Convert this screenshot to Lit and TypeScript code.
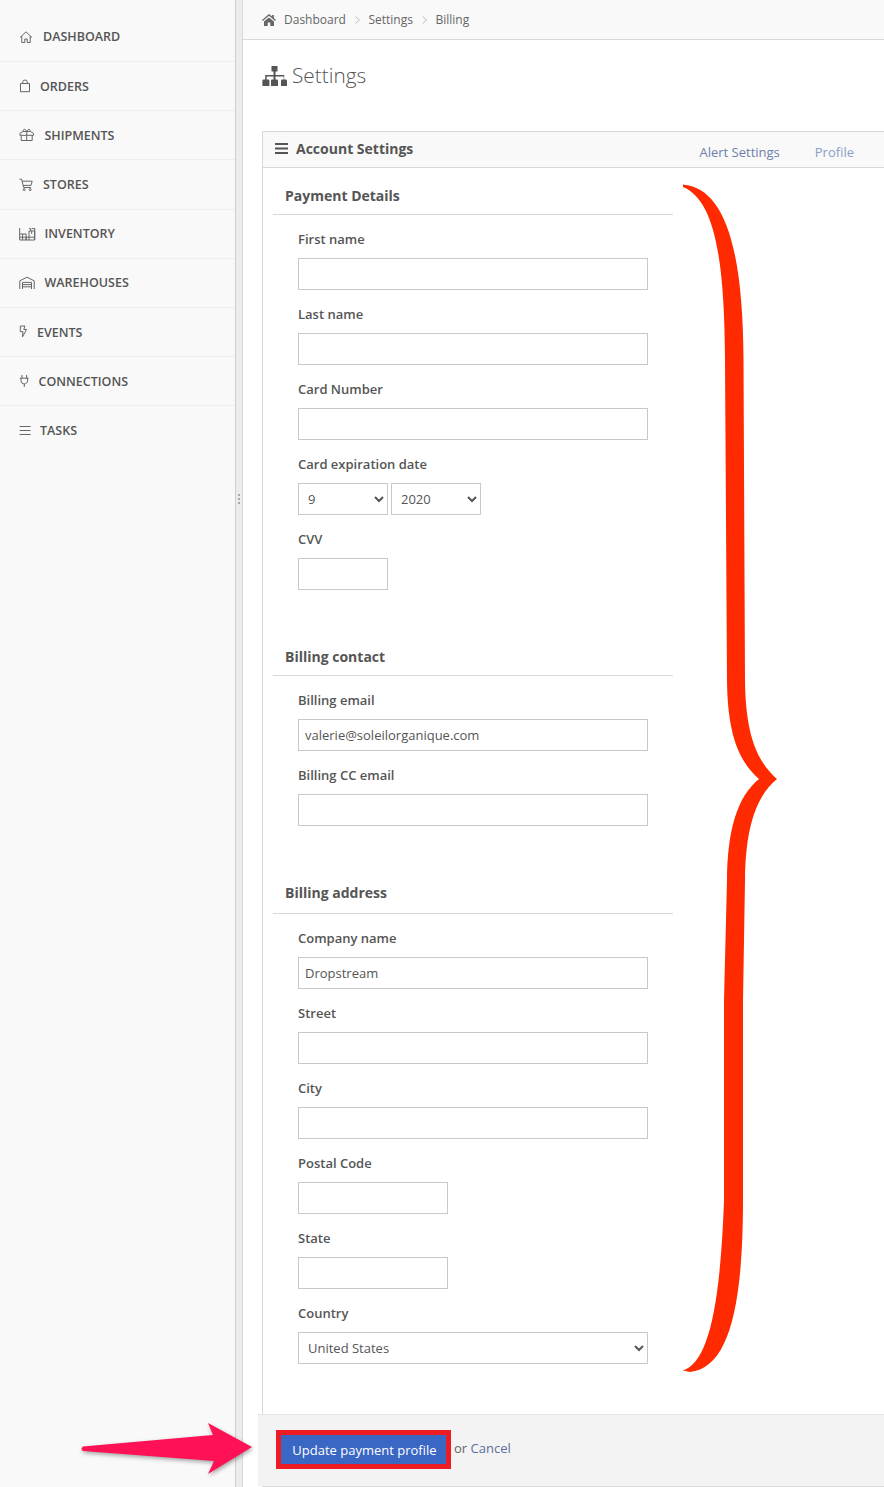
import { LitElement, html, css, svg } from "lit";
import { customElement } from "lit/decorators.js";

const navIcons: Record<string, unknown> = {
  home: svg`<path d="M1 7.500 7 1.800l6 5.700M2.800 6v6.500h3V9h2.400v3.500h3V6"/>`,
  bag: svg`<path d="M1.500 4.500h9v8.200h-9zM3.800 4.500V2.600c0-.9.600-1.400 1.300-1.400h1.800c.7 0 1.300.5 1.300 1.400v1.900"/>`,
  gift: svg`<path d="M1 5.300 4 3.500h7.500l3 1.800v2H1zM2.200 7.300v5.200h11V7.300M7.700 3.500v9M4.500 3.500C3.600 2 5.200.7 6.300 1.600l1.400 1.900 1.400-1.900c1.100-.9 2.700.4 1.800 1.900"/>`,
  cart: svg`<path d="M.5 1.200h2.200l1.900 8.300h7.400M3.200 3.200h10l-1.200 4.200H4.200"/><circle cx="5.200" cy="11.600" r="1"/><circle cx="11.200" cy="11.600" r="1"/>`,
  inventory: svg`<path d="M.7 1v12h15V1M.7 10.200h15M.7 7h6.400v6M7.100 10.200V13M3.600 7v6M10 4h5.700v9M10 4v9M12.700 1.600h3M10 1.600h1.700V4M12.700 4v3"/>`,
  warehouse: svg`<path d="M.8 13V4.800L8 1.200l7.200 3.600V13M3.500 13V6.400h9V13M3.500 8.600h9M3.500 10.800h9"/>`,
  bolt: svg`<path d="M1.300 1h4.600L4.800 4.500h2.700L3.400 12l.6-5.300H1.300z"/>`,
  plug: svg`<path d="M3 1v3.200M7.600 1v3.200M.9 4.200h8.800M2 4.200v2.400c0 2 1.400 3.300 3.300 3.300s3.300-1.300 3.300-3.300V4.200M5.300 9.900v3"/>`,
  menu: svg`<path d="M.6 2.500h11M.6 6.500h11M.6 10.500h11"/>`,
};

const nav = [
  ["DASHBOARD", "home", 24, 14, 13],
  ["ORDERS", "bag", 21, 12, 14],
  ["SHIPMENTS", "gift", 25.4, 16, 14],
  ["STORES", "cart", 24, 15, 14],
  ["INVENTORY", "inventory", 25.5, 16.5, 14],
  ["WAREHOUSES", "warehouse", 25.5, 16, 14],
  ["EVENTS", "bolt", 18, 9, 14],
  ["CONNECTIONS", "plug", 19.5, 10.5, 14],
  ["TASKS", "menu", 21, 12, 13],
] as const;

@customElement("app-root")
export class AppRoot extends LitElement {
  static styles = css`
    :host {
      display: block;
      position: relative;
      width: 884px;
      height: 1487px;
      overflow: hidden;
      background: #fff;
      font-family: "Open Sans", sans-serif;
      color: #555;
    }
    * { box-sizing: border-box; }
    .app { display: flex; height: 1487px; }
    .sidebar {
      width: 236px;
      flex: none;
      background: #f9f9f9;
      border-right: 1px solid #cfcfcf;
      padding-top: 12.900px;
    }
    .nav-item {
      height: 49.200px;
      border-bottom: 1px solid #eeeeee;
      display: flex;
      align-items: center;
      padding-left: 19px;
      font-size: 12.500px;
      font-weight: 600;
      color: #555;
    }
    .nav-item:last-child { border-bottom-color: transparent; }
    .nav-icon { flex: none; display: flex; align-items: center; }
    .nav-icon svg {
      fill: none;
      stroke: #666;
      stroke-width: 1;
      overflow: visible;
    }
    .splitter {
      width: 7px;
      flex: none;
      background: #ececec;
      border-right: 1px solid #d8d8d8;
      padding: 494px 0 0 2px;
      display: flex;
      flex-direction: column;
      gap: 2px;
    }
    .splitter i { width: 2px; height: 2px; background: #a8a8a8; display: block; }
    .main { flex: 1; min-width: 0; display: flex; flex-direction: column; }
    .crumbs {
      height: 40px;
      flex: none;
      background: #f9f9f9;
      border-bottom: 1px solid #d9d9d9;
      padding-left: 19px;
      display: flex;
      align-items: center;
      font-size: 12px;
      color: #666;
    }
    .crumbs .home { width: 14px; height: 12px; fill: #666; margin-right: 8px; }
    .crumbs .sep { width: 5px; height: 8px; margin: 0 8.500px 0 9px; fill: none; stroke: #bbb; stroke-width: 1; }
    .title {
      height: 91px;
      flex: none;
      padding: 23px 0 0 19px;
      display: flex;
      align-items: flex-start;
      gap: 5px;
      font-size: 20.800px;
      line-height: 24px;
      font-weight: 300;
      color: #555;
    }
    .title svg { width: 25px; height: 20px; margin-top: 3px; fill: #555; flex: none; }
    .panel {
      margin-left: 19px;
      flex: 1;
      border-left: 1px solid #d9d9d9;
      border-top: 1px solid #d9d9d9;
      border-bottom: 1px solid #d9d9d9;
      display: flex;
      flex-direction: column;
      min-height: 0;
    }
    .panel-head {
      height: 36px;
      flex: none;
      background: #f9f9f9;
      border-bottom: 1px solid #d9d9d9;
      display: flex;
      align-items: center;
      padding: 0 0 3px 12px;
      font-size: 14px;
      font-weight: 700;
      color: #555;
    }
    .panel-head .menu { width: 13px; height: 11px; margin-right: 8px; stroke: #555; stroke-width: 2; fill: none; }
    .tabs { margin-left: auto; display: flex; gap: 35px; padding: 8px 30px 0 0; font-size: 13px; font-weight: 400; }
    .tabs a { color: #6c80aa; }
    .tabs a.light { color: #8a9dc4; }
    .body { flex: 1; padding: 18px 0 0 10px; width: 410px; }
    .section + .section { margin-top: 57px; }
    .field:last-child { margin-bottom: 0; }
    h3 {
      margin: 0 0 14px;
      padding: 0 0 8px 12px;
      height: 29px;
      font-size: 14px;
      line-height: 20px;
      font-weight: 700;
      color: #555;
      border-bottom: 1px solid #d9d9d9;
    }
    h3.tall { height: 31px; }
    .field { margin: 0 0 14px 25px; }
    label {
      display: block;
      font-size: 13px;
      line-height: 20px;
      font-weight: 600;
      color: #555;
      margin-bottom: 9px;
    }
    input, select {
      display: block;
      height: 32px;
      border: 1px solid #c8c8c8;
      border-radius: 0;
      background: #fff;
      font-family: inherit;
      font-size: 13px;
      color: #555;
      padding: 0 6px;
      outline: none;
    }
    select { padding: 0 5px; }
    .w350 { width: 350px; }
    .w150 { width: 150px; }
    .w90 { width: 90px; }
    .row { display: flex; gap: 3px; }
    .footer {
      margin-left: -5px;
      height: 72px;
      flex: none;
      background: #f3f3f3;
      border-top: 1px solid #e2e2e2;
      padding: 15px 0 0 18px;
      display: flex;
      align-items: flex-start;
      font-size: 13px;
      color: #666;
    }
    .btn-mark { border: 5px solid #ed1c24; flex: none; }
    button {
      display: block;
      width: 165px;
      height: 29px;
      padding: 1px 0 0 2px;
      border: 0;
      background: #3a66c4;
      color: #fff;
      font-family: inherit;
      font-size: 13px;
    }
    .or { margin: 8px 0 0 3px; line-height: 20px; }
    .or a { color: #5b6f9e; }
    .overlay { position: absolute; left: 0; top: 0; width: 884px; height: 1487px; pointer-events: none; }
    .arrow { filter: drop-shadow(1px 2px 2px rgba(0,0,0,.35)); }
  `;

  private field(label: string, cls: string, value = "") {
    return html`<div class="field"><label>${label}</label><input class=${cls} .value=${value} /></div>`;
  }

  render() {
    return html`
      <div class="app">
        <aside class="sidebar">
          ${nav.map(
            ([label, icon, w, iw, ih]) => html`<div class="nav-item">
              <span class="nav-icon" style="width:${w}px">
                <svg width=${iw} height=${ih} viewBox="0 0 ${iw} ${ih}">${navIcons[icon]}</svg>
              </span>${label}
            </div>`
          )}
        </aside>
        <div class="splitter"><i></i><i></i><i></i></div>
        <div class="main">
          <div class="crumbs">
            <svg class="home" viewBox="0 0 14 12"><path d="M7 0 0 6l.8 1L7 1.800 13.200 7l.8-1-2.200-1.900V1h-1.700v1.600zM2 7.600V12h3.700V8.400h2.600V12H12V7.600L7 3.400z"/></svg>
            Dashboard
            <svg class="sep" viewBox="0 0 5 8"><path d="m.5.5 4 3.500-4 3.500"/></svg>
            Settings
            <svg class="sep" viewBox="0 0 5 8"><path d="m.5.5 4 3.500-4 3.500"/></svg>
            Billing
          </div>
          <div class="title">
            <svg viewBox="0 0 25 20"><path d="M9.500 0h6v5.500h-2V9h8.700v4.500h1.300c.8 0 1.500.5 1.500 1.300V20h-6v-5.200c0-.8.600-1.300 1.400-1.300h1.300v-3H13.500v3h1.200c.8 0 1.300.5 1.300 1.300V20H9v-5.200c0-.8.600-1.300 1.300-1.300h1.200v-3H4.700v3H6c.8 0 1.400.5 1.400 1.300V20h-7v-5.200c0-.8.700-1.300 1.500-1.300h1.300V9h8.300V5.500h-2z"/></svg>
            Settings
          </div>
          <section class="panel">
            <div class="panel-head">
              <svg class="menu" viewBox="0 0 13 11"><path d="M0 1h13M0 5.500h13M0 10h13"/></svg>
              Account Settings
              <div class="tabs"><a>Alert Settings</a><a class="light">Profile</a></div>
            </div>
            <div class="body">
              <div class="section">
                <h3>Payment Details</h3>
                ${this.field("First name", "w350")}
                ${this.field("Last name", "w350")}
                ${this.field("Card Number", "w350")}
                <div class="field">
                  <label>Card expiration date</label>
                  <div class="row">
                    <select class="w90"><option>9</option></select>
                    <select class="w90"><option>2020</option></select>
                  </div>
                </div>
                ${this.field("CVV", "w90")}
              </div>
              <div class="section">
                <h3>Billing contact</h3>
                ${this.field("Billing email", "w350", "valerie@soleilorganique.com")}
                ${this.field("Billing CC email", "w350")}
              </div>
              <div class="section">
                <h3 class="tall">Billing address</h3>
                ${this.field("Company name", "w350", "Dropstream")}
                ${this.field("Street", "w350")}
                ${this.field("City", "w350")}
                ${this.field("Postal Code", "w150")}
                ${this.field("State", "w150")}
                <div class="field">
                  <label>Country</label>
                  <select class="w350"><option>United States</option></select>
                </div>
              </div>
            </div>
            <div class="footer">
              <div class="btn-mark"><button>Update payment profile</button></div>
              <div class="or">or <a>Cancel</a></div>
            </div>
          </section>
        </div>
      </div>
      <svg class="overlay" viewBox="0 0 884 1487">
        <path fill="#ff2a00" d="M683 184.500C722 188 743 240 743.500 360L745 680C745.500 730 755 760 777 779C755 797 745.500 830 745 880L743 1000L743 1200C743 1310 728 1368 690 1372L683 1370.500C708 1362 720 1310 724 1200L724 1000L727 880C727.500 830 737 797 759 779C737 760 727.500 730 727 680L725 360C724.500 260 715 200 683 187Z"/>
        <path class="arrow" fill="#ff1155" d="M83 1446.500 213 1435 208 1423 252 1447 208 1474 214 1461 83 1451Q80 1449 83 1446.500Z"/>
      </svg>
    `;
  }
}
